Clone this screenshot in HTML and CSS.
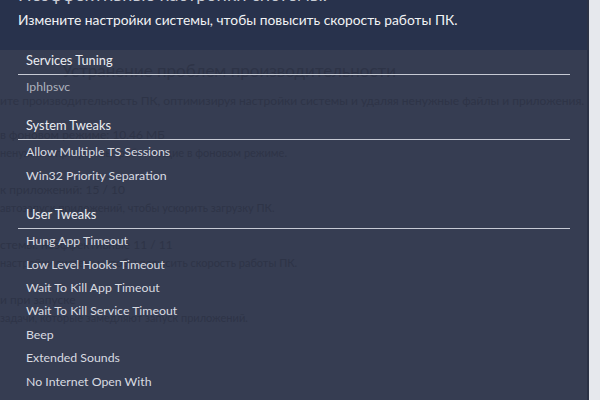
FILE: index.html
```html
<!DOCTYPE html>
<html lang="ru">
<head>
<meta charset="utf-8">
<title>Неэффективные настройки системы</title>
<link rel="stylesheet" href="styles.css">
</head>
<body>
<div class="screen">
<div class="page">
  <div class="bg-lines">
    <p class="bg bg-title">Устранение проблем производительности</p>
    <p class="bg bg-desc">ите производительность ПК, оптимизируя настройки системы и удаляя ненужные файлы и приложения.</p>
    <p class="bg bg-h b1">в фоновом режиме: 10,46 МБ</p>
    <p class="bg bg-s">ненужные программы, работающие в фоновом режиме.</p>
    <p class="bg bg-h">к приложений: 15 / 10</p>
    <p class="bg bg-s">автозапуск приложений, чтобы ускорить загрузку ПК.</p>
    <p class="bg bg-h">стемы: неэффективные 11 / 11</p>
    <p class="bg bg-s">настройки системы, чтобы повысить скорость работы ПК.</p>
    <p class="bg bg-h">и при запуске</p>
    <p class="bg bg-s">задачи, которые замедляют запуск приложений.</p>
  </div>
  <div class="modal">
    <header class="modal-head">
      <h1 class="modal-title">Неэффективные настройки системы.</h1>
      <p class="modal-sub">Измените настройки системы, чтобы повысить скорость работы ПК.</p>
    </header>
    <div class="modal-body">
      <section class="group">
        <h2 class="group-title">Services Tuning</h2>
        <ul class="items">
          <li class="item muted">Iphlpsvc</li>
        </ul>
      </section>
      <section class="group">
        <h2 class="group-title">System Tweaks</h2>
        <ul class="items">
          <li class="item">Allow Multiple TS Sessions</li>
          <li class="item">Win32 Priority Separation</li>
        </ul>
      </section>
      <section class="group">
        <h2 class="group-title">User Tweaks</h2>
        <ul class="items">
          <li class="item">Hung App Timeout</li>
          <li class="item">Low Level Hooks Timeout</li>
          <li class="item">Wait To Kill App Timeout</li>
          <li class="item">Wait To Kill Service Timeout</li>
          <li class="item">Beep</li>
          <li class="item">Extended Sounds</li>
          <li class="item">No Internet Open With</li>
        </ul>
      </section>
    </div>
  </div>
</div>
<div class="edge"></div>
</div>
</body>
</html>
```

FILE: styles.css
```css
* { box-sizing: border-box; }
html, body {
  margin: 0;
  padding: 0;
  background: #e9ebef;
}
body {
  font-family: Lato, "Noto Sans", "DejaVu Sans", sans-serif;
}
.screen {
  display: flex;
  width: 600px;
  height: 400px;
}
.page {
  position: relative;
  flex: 0 0 587px;
  width: 587px;
  height: 400px;
  background: #363d52;
  overflow: hidden;
}
.edge {
  flex: 0 0 13px;
  width: 13px;
  height: 400px;
  background: #e6e8ed;
  border-left: 2px solid #2b3245;
}
.bg-lines {
  padding-top: 61px;
  color: #2e3447;
}
.bg {
  margin: 0;
}
.bg-title {
  font-size: 17px;
  line-height: 20px;
  padding-left: 62px;
}
.bg-desc {
  font-size: 12px;
  line-height: 16px;
  margin-top: 12px;
}
.bg-h {
  font-size: 12px;
  line-height: 16px;
}
.bg-s {
  font-size: 11px;
  line-height: 16px;
  margin: 2px 0 21px;
}
.b1 { margin-top: 18px; }
.modal {
  position: absolute;
  top: 0;
  left: 0;
  right: 0;
  bottom: 0;
  overflow: hidden;
}
.modal-head {
  display: flow-root;
  height: 50px;
  background: rgba(40, 49, 76, 0.95);
  padding: 0 18px;
}
.modal-title {
  margin: -17px 0 0;
  font-size: 18px;
  line-height: 22px;
  font-weight: 400;
  color: #c9cdd6;
}
.modal-sub {
  margin: 6px 0 0;
  font-size: 13.8px;
  line-height: 18px;
  color: #f1f2f5;
}
.modal-body {
  padding: 0 17px 0 18px;
}
.group + .group { margin-top: 17px; }
.group-title {
  margin: 0;
  padding: 0 8px 4px;
  font-size: 12.8px;
  line-height: 20px;
  font-weight: 400;
  color: #eceef2;
  border-bottom: 1px solid #c6cad4;
}
.items {
  list-style: none;
  margin: 0;
  padding: 0;
}
.item {
  padding: 0 8px;
  font-size: 12.3px;
  line-height: 23.4px;
  color: #d9dbe1;
}
.item.muted { color: #aeb2bd; }
```
